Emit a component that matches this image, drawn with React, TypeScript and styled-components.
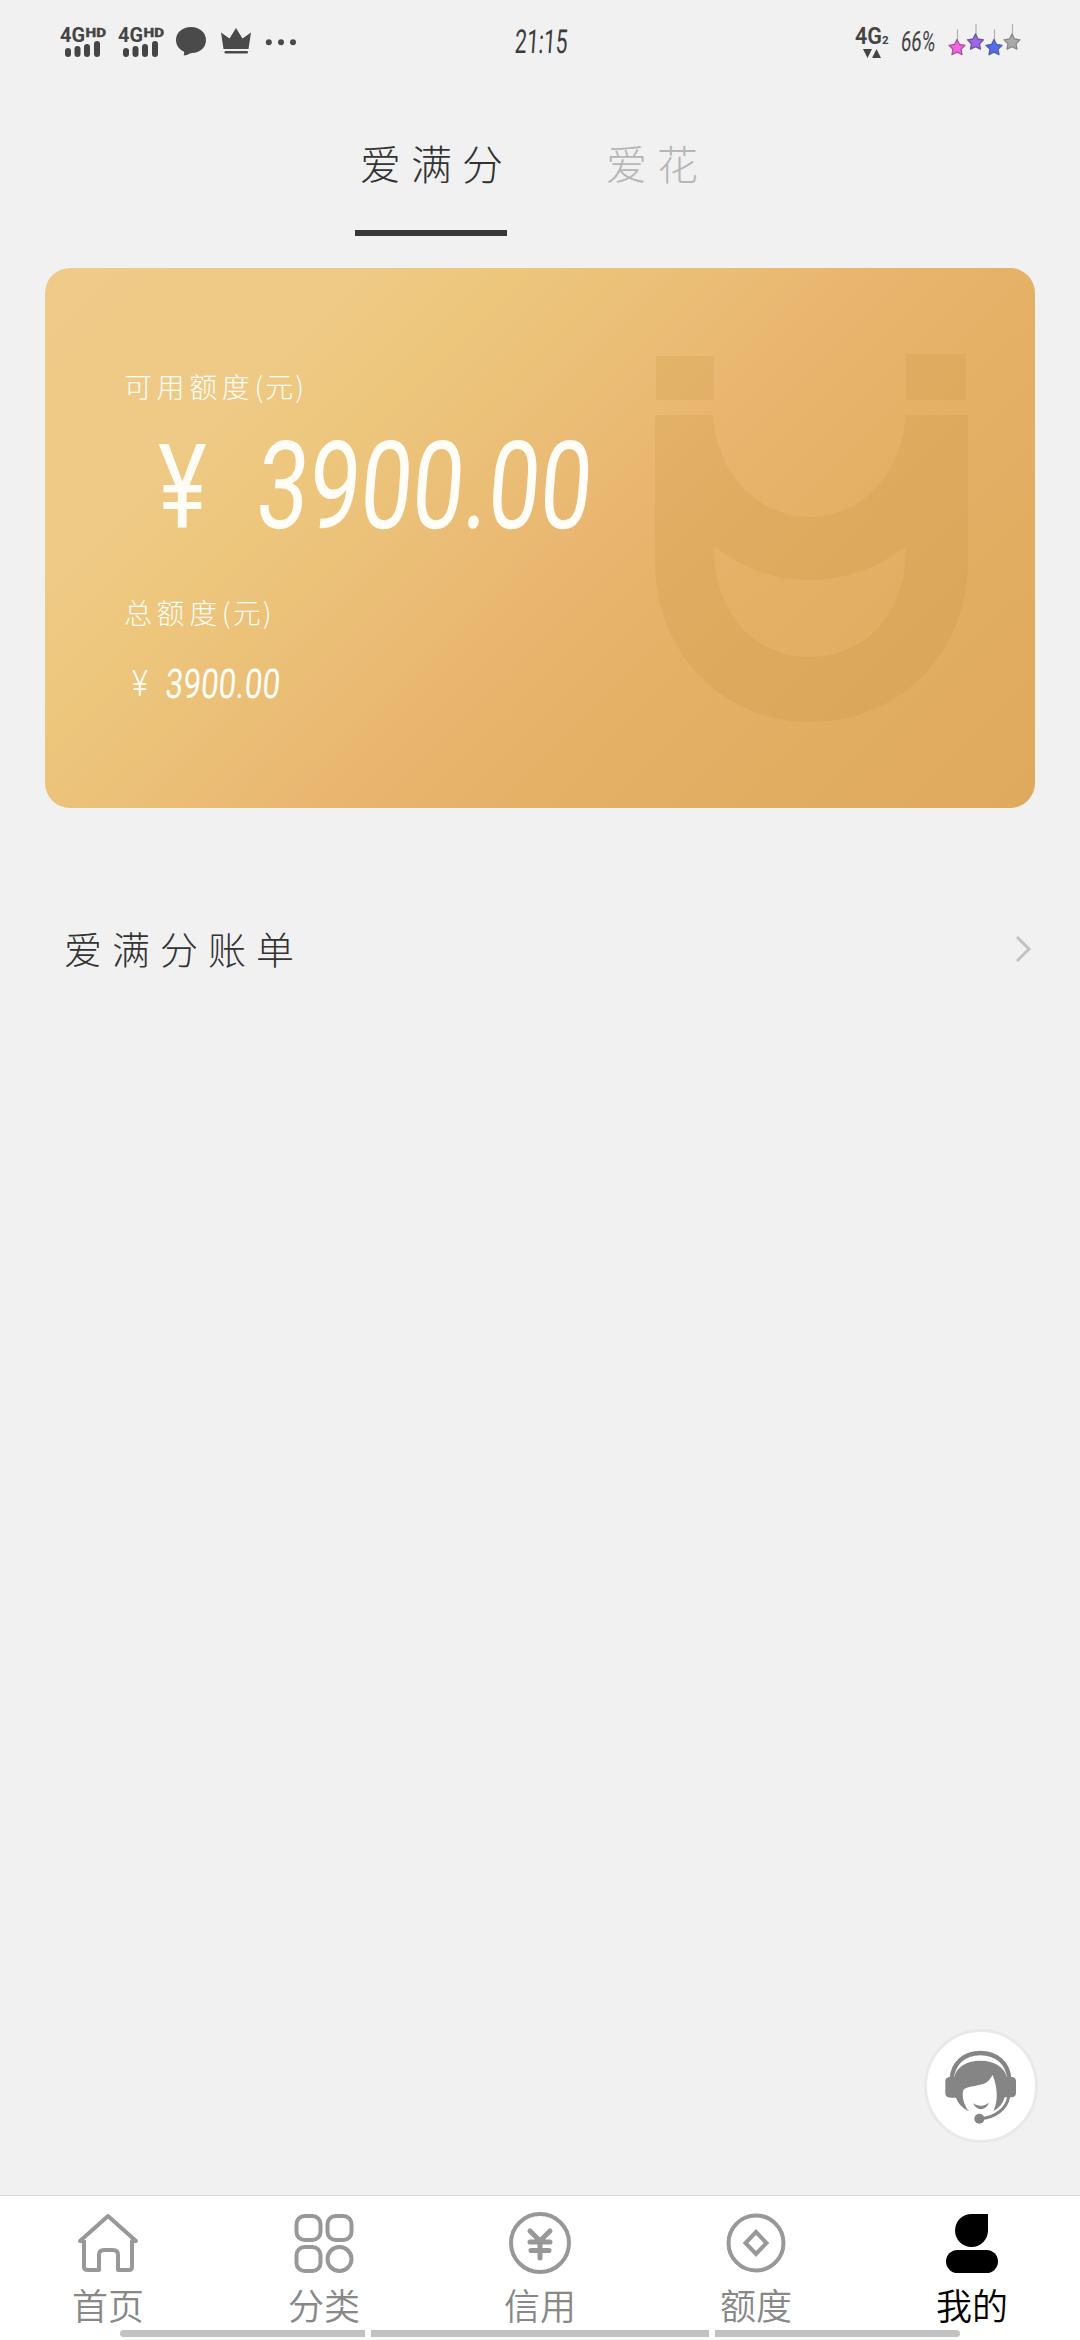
import React from "react";
import styled, { createGlobalStyle } from "styled-components";

const Global = createGlobalStyle`
  * { box-sizing: border-box; }
  body {
    margin: 0;
    background: #f1f1f1;
    font-family: "Noto Sans CJK SC", "Noto Sans", sans-serif;
  }
  svg { display: block; flex: none; overflow: visible; }
`;

const Screen = styled.div`
  position: relative;
  display: flex;
  flex-direction: column;
  width: 1080px;
  height: 2340px;
  overflow: hidden;
  background: #f1f1f1;
`;

const StatusBar = styled.header`
  display: grid;
  grid-template-columns: 455px 90px 1fr;
  height: 82px;
  padding: 24px 58px 0 60px;
`;

const StatusGroup = styled.div<{ $end?: boolean }>`
  display: flex;
  align-items: flex-start;
  justify-content: ${(p) => (p.$end ? "flex-end" : "flex-start")};
`;

const Signal = styled.div`
  width: 58px;
`;

const Squeezed = styled.span<{ $size: number; $x: number; $weight?: number; $slant?: number; $line: number }>`
  display: block;
  width: max-content;
  font-family: Roboto, "Liberation Sans", sans-serif;
  font-size: ${(p) => p.$size}px;
  font-weight: ${(p) => p.$weight ?? 400};
  line-height: ${(p) => p.$line}px;
  white-space: pre;
  transform-origin: left center;
  transform: scaleX(${(p) => p.$x}) skewX(${(p) => -(p.$slant ?? 0)}deg);
`;

const Clock = styled.div`
  padding-top: 2px;
  color: #3c3c3c;
`;

const Network = styled.div`
  width: 46px;
  color: #444;
`;

const Battery = styled.div`
  width: 47px;
  padding-top: 4px;
  color: #444;
`;

const Tabs = styled.nav`
  display: flex;
  gap: 94px;
  height: 186px;
  padding: 47px 0 0 355px;
`;

const Tab = styled.div<{ $active?: boolean }>`
  height: 107px;
  padding-left: 5px;
  width: ${(p) => (p.$active ? 152 : 110)}px;
  border-bottom: 6px solid ${(p) => (p.$active ? "#383637" : "transparent")};
  color: ${(p) => (p.$active ? "#333" : "#b6b6b6")};
  font-size: 41px;
  font-weight: 300;
  line-height: 67px;
  letter-spacing: 10px;
  white-space: nowrap;
`;

const Card = styled.section`
  display: flex;
  width: 990px;
  height: 540px;
  margin: 0 45px;
  border-radius: 25px;
  background: linear-gradient(135deg, #efca88 0%, #efca86 20%, #edc77d 29%, #ebbf77 41%, #e9b670 53%, #e5b167 66%, #e1ad61 82%, #dfaa5d 100%);
  color: #fffdf6;
`;

const Balance = styled.div`
  display: flex;
  flex-direction: column;
  width: 610px;
  padding: 96px 0 0 79px;
`;

const Caption = styled.div`
  height: 44px;
  font-size: 28px;
  font-weight: 300;
  line-height: 44px;
  letter-spacing: 4.6px;
  white-space: nowrap;
`;

const Unit = styled.span`
  letter-spacing: 2px;
`;

const Amount = styled.div<{ $big?: boolean }>`
  display: grid;
  grid-template-columns: ${(p) => (p.$big ? "98px" : "33px")} 1fr;
  height: ${(p) => (p.$big ? 182 : 88)}px;
  padding: ${(p) => (p.$big ? "13px 0 0 34px" : "25px 0 0 8px")};
`;

const BillRow = styled.section`
  display: flex;
  align-items: center;
  justify-content: space-between;
  height: 100px;
  margin-top: 91px;
  padding: 0 49px 0 64px;
  color: #333;
`;

const BillTitle = styled.div`
  margin-top: -4px;
  font-size: 38px;
  font-weight: 300;
  letter-spacing: 10px;
`;

const Spacer = styled.div`
  flex: 1;
`;

const ServiceButton = styled.button`
  align-self: flex-end;
  width: 114px;
  height: 114px;
  margin: 0 42px 52px 0;
  padding: 0;
  border: 3px solid #e9e9e9;
  border-radius: 50%;
  background: #fff;
`;

const BottomBar = styled.nav`
  display: grid;
  grid-template-columns: repeat(5, 1fr);
  height: 145px;
  border-top: 1px solid #d6d6d6;
  background: #fff;
`;

const NavItem = styled.div<{ $active?: boolean }>`
  display: flex;
  flex-direction: column;
  align-items: center;
  padding-top: 15px;
  color: ${(p) => (p.$active ? "#000" : "#888")};
  font-size: 36px;
  font-weight: 350;
  line-height: 58px;
`;

const Gesture = styled.div`
  position: absolute;
  left: 120px;
  bottom: 3px;
  display: grid;
  grid-template-columns: 245px 338px 245px;
  gap: 6px;
  height: 7px;
`;

const GesturePart = styled.div<{ $r: string }>`
  border-radius: ${(p) => p.$r};
  background: #c2c2c2;
`;

const SignalIcon = () => (
  <Signal>
    <svg width="48" height="36" viewBox="0 0 48 36" fill="#454545">
      <text x="0" y="17.5" fontFamily="Roboto" fontWeight="700" fontSize="20.5" textLength="25" lengthAdjust="spacingAndGlyphs">4G</text>
      <text x="25.5" y="12.5" fontFamily="Roboto" fontWeight="800" fontSize="13.5" textLength="20.5" lengthAdjust="spacingAndGlyphs" stroke="#454545" strokeWidth="0.4">HD</text>
      <rect x="5" y="24" width="6" height="9" rx="3" />
      <rect x="14.5" y="22" width="6" height="11" rx="3" />
      <rect x="24" y="20" width="6" height="13" rx="3" />
      <rect x="34" y="17" width="6" height="16" rx="3" />
    </svg>
  </Signal>
);

const StatusGlyphs = () => (
  <svg width="124" height="36" viewBox="0 0 124 36" fill="#4a4a4a">
    <path d="M15 3c8.600 0 15 5.500 15 13s-6 13-14 13c-3 .5-5 2.500-8.500 2.500 1-1.500.7-3 .3-4C3 25.500 0 21 0 16 0 8.500 6.500 3 15 3z" />
    <path d="M45 8.500l8.500 6L60 4l6.500 10.500 8.500-6L72.500 25h-25z" />
    <rect x="48.500" y="27" width="23.500" height="2.600" rx="1.300" />
    <circle cx="92.800" cy="18.300" r="3" />
    <circle cx="105" cy="18.300" r="3" />
    <circle cx="117" cy="18.300" r="3" />
  </svg>
);

const stars = [
  { x: 9, y: 23.5, fill: "#f562e3", edge: "#a0589a" },
  { x: 27.5, y: 18, fill: "#9d64ee", edge: "#6d55a0" },
  { x: 46, y: 23.5, fill: "#566bef", edge: "#5260a4" },
  { x: 64, y: 18, fill: "#aaa", edge: "#8a8a8a" },
];

const Stars = () => (
  <svg width="74" height="36" viewBox="0 0 74 36">
    {stars.map((s, i) => (
      <g key={i} transform={`translate(${s.x} ${s.y})`} stroke={s.edge}>
        <path d="M.5 -7V-18" stroke="#b0b0b0" strokeWidth="1.200" />
        <path d="M0-8l2.500 5 5.500.8-4 3.900 1 5.500-5-2.600-5 2.600 1-5.500-4-3.900 5.500-.8z" fill={s.fill} strokeWidth="1.300" strokeLinejoin="round" />
      </g>
    ))}
  </svg>
);

const Watermark = () => (
  <svg width="320" height="540" viewBox="655 268 320 540" fill="#b88a30" fillOpacity="0.14">
    <rect x="656" y="356" width="58" height="44" />
    <rect x="906" y="354" width="60" height="46" />
    <path
      fillRule="evenodd"
      d="M655 415H713C717 476 760 517 810 517S901 476 906 415H968V560C968 655 898 722 811 722S655 655 655 560ZM714 546C714 620 760 657 810 657S906 620 906 546C878 568 845 580 810 580S742 568 714 546Z"
    />
  </svg>
);

const ServiceIcon = () => (
  <svg width="108" height="108" viewBox="81 66 324 324" fill="#858585">
    <path d="M155 208C158 160 192 129 241 129S325 160 328 208" fill="none" stroke="#858585" strokeWidth="13" />
    <path d="M147 201H163C168 174 197 152 241 152S315 174 320 201H338Q348 204 348 214V250Q347 261 336 262H314C308 281 298 295 280 303C294 276 294 235 278 195C270 207 267 212 260 217C240 230 207 226 190 239C185 258 190 282 207 304C187 294 174 280 168 263H154Q137 263 136 251V213Q136 204 147 201Z" />
    <path d="M219 280C233 290 252 290 267 278C257 303 230 304 219 280Z" />
    <path d="M326 260C320 295 287 324 239 326" fill="none" stroke="#858585" strokeWidth="9" />
    <circle cx="238" cy="326" r="15" />
  </svg>
);

const NavIcon = ({ kind }: { kind: string }) => (
  <svg width="64" height="64" viewBox="0 0 64 64" fill="none" stroke="#989898" strokeWidth="4">
    {kind === "home" && (
      <path d="M8 30L4 30L32 5L60 30H56V56Q56 59 53 59H42V44Q42 39 37 39H28Q23 39 23 44V59H12Q8 59 8 56V29" strokeLinejoin="round" />
    )}
    {kind === "grid" && (
      <>
        <rect x="4.500" y="5" width="24" height="24" rx="8" />
        <rect x="35.500" y="5" width="24" height="24" rx="8" />
        <rect x="4.500" y="36" width="24" height="24" rx="8" />
        <circle cx="47.500" cy="48" r="12" />
      </>
    )}
    {kind === "yen" && (
      <>
        <circle cx="32" cy="32" r="29" />
        <path d="M22 20L32 30L42 20M22 31H42M23 39.500H41M32 30V47" strokeWidth="5" strokeLinecap="round" />
      </>
    )}
    {kind === "quota" && (
      <>
        <circle cx="32" cy="32" r="27.500" />
        <path d="M32 21L42.500 32L32 43L21.500 32Z" />
      </>
    )}
    {kind === "me" && (
      <g fill="#000" stroke="none">
        <path d="M32 3H48V19A16.500 16.500 0 1 1 32 3Z" />
        <rect x="6" y="39" width="52" height="23" rx="11.500" />
      </g>
    )}
  </svg>
);

const navItems = [
  { kind: "home", label: "首页" },
  { kind: "grid", label: "分类" },
  { kind: "yen", label: "信用" },
  { kind: "quota", label: "额度" },
  { kind: "me", label: "我的", active: true },
];

export default function App() {
  return (
    <Screen>
      <Global />
      <StatusBar>
        <StatusGroup>
          <SignalIcon />
          <SignalIcon />
          <StatusGlyphs />
        </StatusGroup>
        <Clock>
          <Squeezed $size={33} $x={0.64} $slant={6} $line={32}>21:15</Squeezed>
        </Clock>
        <StatusGroup $end>
          <Network>
            <svg width="40" height="36" viewBox="0 0 40 36" fill="#444">
              <text x="0" y="19.500" fontFamily="Roboto" fontWeight="600" fontSize="24" textLength="27" lengthAdjust="spacingAndGlyphs">4G</text>
              <text x="27" y="19.500" fontFamily="Roboto" fontWeight="700" fontSize="11.500">2</text>
              <path d="M8 25H17L12.500 34ZM17 34L21.500 25L26 34Z" />
            </svg>
          </Network>
          <Battery>
            <Squeezed $size={28} $x={0.66} $slant={8} $line={28}>66%</Squeezed>
          </Battery>
          <Stars />
        </StatusGroup>
      </StatusBar>

      <Tabs>
        <Tab $active>爱满分</Tab>
        <Tab>爱花</Tab>
      </Tabs>

      <Card>
        <Balance>
          <Caption>可用额度<Unit>(元)</Unit></Caption>
          <Amount $big>
            <Squeezed $size={116} $x={0.8} $weight={400} $line={132}>¥</Squeezed>
            <Squeezed $size={122} $x={0.755} $weight={400} $slant={6} $line={132}>3900.00</Squeezed>
          </Amount>
          <Caption>总额度<Unit>(元)</Unit></Caption>
          <Amount>
            <Squeezed $size={37} $x={0.83} $weight={300} $line={50}>¥</Squeezed>
            <Squeezed $size={41} $x={0.77} $weight={400} $slant={6} $line={50}>3900.00</Squeezed>
          </Amount>
        </Balance>
        <Watermark />
      </Card>

      <BillRow>
        <BillTitle>爱满分账单</BillTitle>
        <svg width="16" height="28" viewBox="0 0 16 28" fill="none" stroke="#c2c2c2" strokeWidth="3">
          <path d="M2 2L14 14L2 26" />
        </svg>
      </BillRow>

      <Spacer />

      <ServiceButton aria-label="客服">
        <ServiceIcon />
      </ServiceButton>

      <BottomBar>
        {navItems.map((n) => (
          <NavItem key={n.kind} $active={n.active}>
            <NavIcon kind={n.kind} />
            {n.label}
          </NavItem>
        ))}
      </BottomBar>

      <Gesture>
        <GesturePart $r="4px 0 0 4px" />
        <GesturePart $r="0" />
        <GesturePart $r="0 4px 4px 0" />
      </Gesture>
    </Screen>
  );
}
